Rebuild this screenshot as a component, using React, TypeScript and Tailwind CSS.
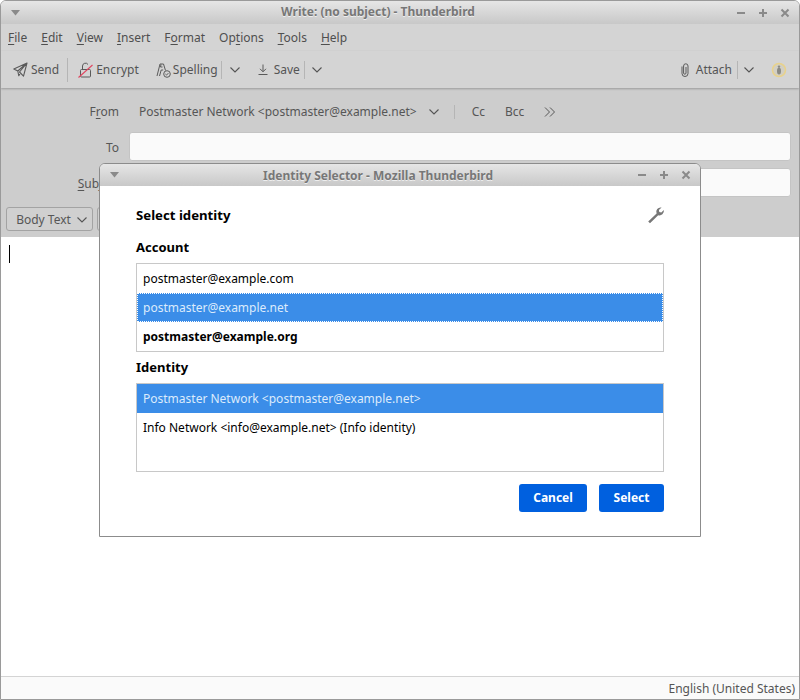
import React from "react";

const U = ({ children }: { children: React.ReactNode }) => <span className="underline underline-offset-2 decoration-1">{children}</span>;

const Chevron = ({ className = "" }: { className?: string }) => (
  <svg width="12" height="8" viewBox="0 0 12 8" fill="none" stroke="currentColor" strokeWidth="1.1" className={className}>
    <path d="M1.5 1.5 6 6l4.5-4.5" />
  </svg>
);

const Controls = () => (
  <div className="flex items-center gap-[10px] text-[#8a8a8a]">
    <svg width="12" height="12" viewBox="0 0 12 12" stroke="currentColor" strokeWidth="2"><path d="M2 6h8" /></svg>
    <svg width="12" height="12" viewBox="0 0 12 12" stroke="currentColor" strokeWidth="2"><path d="M2 6h8M6 2v8" /></svg>
    <svg width="12" height="12" viewBox="0 0 12 12" stroke="currentColor" strokeWidth="2"><path d="M2.5 2.5l7 7M9.5 2.5l-7 7" /></svg>
  </div>
);

const TitleBar = ({ title, h, top }: { title: string; h: string; top: string }) => (
  <div className={`${h} shrink-0 flex items-center justify-between pl-[10px] pr-[8px] bg-gradient-to-b from-[#e6e6e6] to-[#c8c8c8] relative`}>
    <svg width="9" height="6" viewBox="0 0 9 6"><path d="M0 0h9L4.5 5.5z" fill="#8a8a8a" /></svg>
    <span className={`absolute left-0 right-[44px] ${top} text-center font-bold text-[12px] text-[#777777] [text-shadow:0_1px_0_#eeeeee] pointer-events-none`}>{title}</span>
    <Controls />
  </div>
);

const Sep = ({ h = "h-[18px]" }: { h?: string }) => <div className={`w-px ${h} bg-[#b5b5b5]`} />;

const Row = ({ children, cls = "" }: { children: React.ReactNode; cls?: string }) => (
  <div className={`h-[29px] flex items-center pl-[6px] text-[12px] ${cls}`}>{children}</div>
);

export default function App() {
  return (
    <div
      className="relative w-[800px] h-[700px] overflow-hidden bg-white text-[#4a4a4a] rounded-t-[6px] border border-[#9a9a9a] flex flex-col"
      style={{ fontFamily: '"Noto Sans", sans-serif' }}
    >
      <TitleBar title="Write: (no subject) - Thunderbird" h="h-[23px]" top="top-[2px]" />

      <div className="h-[27px] shrink-0 bg-[#d4d4d4] flex items-center pl-[7px] gap-[14px] text-[12px] text-[#4f4f4f]">
        <span><U>F</U>ile</span>
        <span><U>E</U>dit</span>
        <span><U>V</U>iew</span>
        <span><U>I</U>nsert</span>
        <span>F<U>o</U>rmat</span>
        <span>Op<U>t</U>ions</span>
        <span><U>T</U>ools</span>
        <span><U>H</U>elp</span>
      </div>

      <div className="h-[37px] shrink-0 bg-[#d4d4d4] flex items-center pl-[12px] pr-[12px] text-[12px] text-[#555555] shadow-[0_1px_2px_#00000040] relative">
        <svg width="15" height="15" viewBox="0 0 15 15" fill="none" stroke="#5a5a5a" strokeWidth="1.1"><path d="M14 1 .8 7l4 2L14 1 6.5 10l4 4.2zM4.8 9l1 4.8 1.7-3" strokeLinejoin="round" /></svg>
        <span className="ml-[3px]">Send</span>
        <div className="ml-[8px]"><Sep h="h-[24px]" /></div>
        <svg width="15" height="16" viewBox="0 0 15 16" fill="none" stroke="#5a5a5a" className="ml-[10px]"><rect x="2.5" y="7.5" width="10" height="7.5" rx="1" /><path d="M4.5 7.5V4a3 3 0 0 1 5.5-1.5" /><path d="M.5 15.5 14.5 3" stroke="#e0455f" strokeWidth="1.1" /></svg>
        <span className="ml-[3px]">Encrypt</span>
        <svg width="15" height="16" viewBox="0 0 15 16" fill="none" stroke="#5a5a5a" className="ml-[17px]"><path d="M1 14 4 2h3.5l2 6.5" /><path d="M3.5 14 5.2 8h2M5 2.5 4.5 5h2" /><circle cx="11" cy="12" r="3.3" /><path d="m9.4 12 1.1 1.1 1.9-2" /></svg>
        <span className="ml-[2px]">Spelling</span>
        <div className="ml-[3px]"><Sep /></div>
        <Chevron className="ml-[7px] text-[#555555]" />
        <svg width="10" height="13" viewBox="0 0 10 13" fill="none" stroke="#5a5a5a" className="ml-[17px]"><path d="M5 1.5v7M2 5.8 5 8.8l3-3M.5 11.5h9" /></svg>
        <span className="ml-[6px]">Save</span>
        <div className="ml-[4px]"><Sep /></div>
        <Chevron className="ml-[6px] text-[#555555]" />
        <div className="flex-1" />
        <svg width="14" height="16" viewBox="0 0 14 16" fill="none" stroke="#5a5a5a"><path d="M4 4.5v7a3 3 0 0 0 6 0V4a2.2 2.2 0 0 0-4.4 0v7a1 1 0 0 0 2.4 0V5" /></svg>
        <span className="ml-[4px]">Attach</span>
        <div className="ml-[5px]"><Sep /></div>
        <Chevron className="ml-[5px] text-[#555555]" />
        <svg width="16" height="16" viewBox="0 0 16 16" className="ml-[16px]">
          <circle cx="8" cy="8" r="6.5" fill="#d2cfc4" stroke="#e8d28c" strokeWidth="1.6" />
          <ellipse cx="8" cy="9" rx="2" ry="3.6" fill="#8a8a84" />
          <circle cx="8" cy="4.6" r="1.2" fill="#8a8a84" />
        </svg>
      </div>

      <div className="h-[149px] shrink-0 bg-[#cdcdcd] flex flex-col text-[12px] text-[#565656]">
        <div className="h-[42px] flex items-center pt-[5px]">
          <div className="w-[118px] text-right">F<U>r</U>om</div>
          <span className="ml-[20px]">Postmaster Network &lt;postmaster@example.net&gt;</span>
          <Chevron className="ml-[11px]" />
          <div className="ml-[14px]"><Sep h="h-[14px]" /></div>
          <span className="ml-[17px]">Cc</span>
          <span className="ml-[20px]">Bcc</span>
          <svg width="12" height="10" viewBox="0 0 12 10" fill="none" stroke="currentColor" className="ml-[20px]"><path d="M1 .5 5.5 5 1 9.5M6 .5 10.5 5 6 9.5" /></svg>
        </div>
        <div className="h-[30px] mt-[1px] flex items-center">
          <div className="w-[118px] text-right pt-[3px]">To</div>
          <div className="ml-[10px] w-[662px] h-[29px] bg-[#fafafa] border border-[#c4c4c4] rounded-[3px]" />
        </div>
        <div className="h-[30px] mt-[6px] flex items-center">
          <div className="w-[118px] text-right pt-[3px]"><U>S</U>ubject</div>
          <div className="ml-[10px] w-[662px] h-[29px] bg-[#fafafa] border border-[#c4c4c4] rounded-[3px]" />
        </div>
        <div className="h-[24px] mt-[10px] flex items-center pl-[5px] gap-[4px]">
          <div className="w-[87px] h-[24px] border border-[#a3a3a3] rounded-[3px] bg-[#d0d0d0] flex items-center justify-center gap-[5px] pl-[5px] pt-[1px]">
            <span>Body Text</span>
            <Chevron />
          </div>
          <div className="w-[20px] h-[24px] border border-[#a3a3a3] rounded-[3px] bg-[#d0d0d0]" />
        </div>
      </div>

      <div className="flex-1 bg-white relative">
        <div className="absolute left-[8px] top-[8px] w-px h-[18px] bg-black" />
      </div>

      <div className="h-[23px] shrink-0 bg-[#fafafa] border-t border-[#d4d4d4] flex items-center justify-end pr-[4px] pt-[2px] text-[12px] text-[#555555]">
        English (United States)
      </div>

      {/* Dialog */}
      <div className="absolute left-[98px] top-[162px] w-[602px] h-[374px] bg-white border border-[#8c8c8c] rounded-t-[6px] flex flex-col overflow-hidden">
        <TitleBar title="Identity Selector - Mozilla Thunderbird" h="h-[22px]" top="top-[3px]" />
        <div className="flex-1 flex flex-col pl-[36px] pr-[36px] text-black">
          <div className="flex items-center justify-between h-[18px] mt-[20px]">
            <span className="font-bold text-[13.2px] pt-[2px]">Select identity</span>
            <svg width="18" height="18" viewBox="0 0 18 18" fill="#777777" className="mr-[-1px]">
              <path d="M1.2 15.6 9.6 7.4a4.2 4.2 0 0 1 .6-4.3A4.4 4.4 0 0 1 14.6 1.5l-2.7 2.6.4 2 2 .5 2.5-2.6a4.3 4.3 0 0 1-1.4 4.3 4.3 4.3 0 0 1-4.2.9l-8.2 8z" />
            </svg>
          </div>
          <div className="font-bold text-[13px] mt-[14px] h-[18px] leading-[18px]">Account</div>
          <div className="mt-[7px] h-[89px] border border-[#c8c8c8] flex flex-col">
            <Row>postmaster@example.com</Row>
            <Row cls="bg-[#3b8de8] text-[#dcebfc] outline outline-1 outline-dotted outline-offset-[-1px] outline-white">postmaster@example.net</Row>
            <Row cls="font-bold">postmaster@example.org</Row>
          </div>
          <div className="font-bold text-[13px] mt-[6px] h-[18px] leading-[18px]">Identity</div>
          <div className="mt-[7px] h-[89px] border border-[#c8c8c8] flex flex-col">
            <Row cls="bg-[#3b8de8] text-[#dcebfc]">Postmaster Network &lt;postmaster@example.net&gt;</Row>
            <Row>Info Network &lt;info@example.net&gt; (Info identity)</Row>
          </div>
          <div className="mt-[12px] flex justify-end gap-[12px]">
            <button className="w-[68px] h-[28px] rounded-[3px] bg-[#0060df] text-white text-[12px] font-bold">Cancel</button>
            <button className="w-[65px] h-[28px] rounded-[3px] bg-[#0060df] text-white text-[12px] font-bold">Select</button>
          </div>
        </div>
      </div>
    </div>
  );
}
